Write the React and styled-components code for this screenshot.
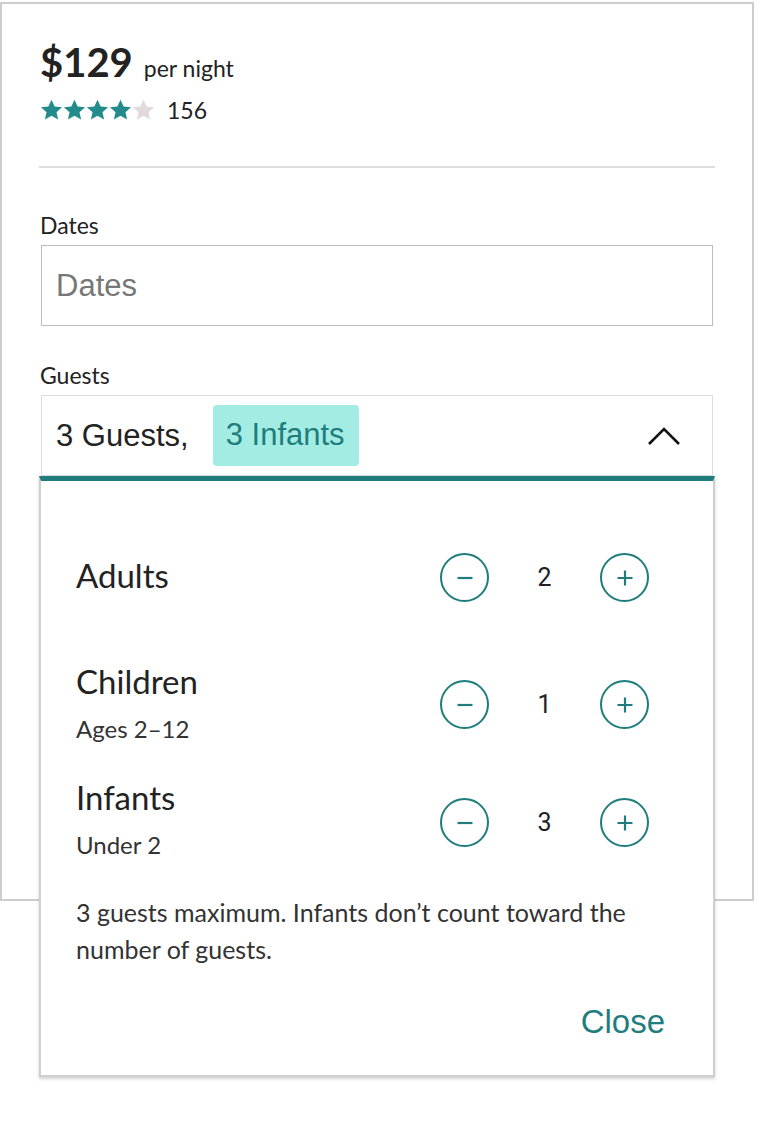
import React from 'react'
import styled, { createGlobalStyle } from 'styled-components'

const Global = createGlobalStyle`
  html, body, #root {
    min-height: 100%;
  }
  body {
    margin: 0;
    background: #fff;
    font-family: Lato, "Liberation Sans", sans-serif;
    color: #222;
  }
`

const teal = '#1f7d7d'

const Page = styled.main`
  min-height: 1132px;
`

const Card = styled.section`
  position: relative;
  width: 754px;
  min-height: 899px;
  margin-top: 2px;
  box-sizing: border-box;
  border: 2px solid #cdcdcd;
  padding: 34px 37px 0 37px;
`

const PriceRow = styled.div`
  display: flex;
  align-items: baseline;
  gap: 11px;
  line-height: 48px;
  padding-left: 1px;
`

const Price = styled.span`
  font-size: 40px;
  font-weight: 700;
  color: #222;
`

const PerNight = styled.span`
  font-size: 23px;
  color: #222;
`

const RatingRow = styled.div`
  display: flex;
  align-items: center;
  gap: 12px;
  height: 24px;
  margin-top: 6px;
  padding-left: 1px;
  font-size: 23px;
`

const Stars = styled.div`
  display: flex;
`

const Divider = styled.hr`
  border: 0;
  border-top: 2px solid #dedede;
  margin: 44px 0 44px 0;
`

const Label = styled.div`
  font-size: 23px;
  line-height: 26px;
  color: #222;
  margin-bottom: 7px;
  padding-left: 1px;
`

const Field = styled.div`
  position: relative;
  height: 81px;
  margin: 0 2px ${p => p.$gap || 0}px 2px;
  box-sizing: border-box;
  border: 1px solid ${p => p.$border};
  display: flex;
  align-items: center;
  padding: 0 16px 0 14px;
  font-family: "Liberation Sans", Arial, sans-serif;
  font-size: 31px;
`

const Placeholder = styled.span`
  color: #777;
`

const Chip = styled.span`
  margin-left: 24px;
  background: #a3ece4;
  color: ${teal};
  border-radius: 4px;
  padding: 12px 14px 13px 13px;
`

const Chevron = styled.svg`
  margin-left: auto;
  margin-right: 15px;
`

const Dropdown = styled.div`
  position: absolute;
  top: 80px;
  left: -3px;
  width: 676px;
  box-sizing: border-box;
  background: #fff;
  border: 2px solid #cfcfcf;
  border-top: 5px solid ${teal};
  box-shadow: 0 2px 3px rgba(0, 0, 0, 0.18);
  padding: 77px 48px 35px 35px;
  font-family: Lato, "Liberation Sans", sans-serif;
  z-index: 2;
`

const Row = styled.div`
  display: flex;
  align-items: flex-start;
  justify-content: space-between;
  margin-bottom: ${p => p.$mb}px;
`

const RowText = styled.div`
  display: flex;
  flex-direction: column;
`

const RowTitle = styled.div`
  font-size: 33px;
  line-height: 34px;
  color: #222;
`

const RowSub = styled.div`
  font-size: 24px;
  line-height: 28px;
  color: #333;
  margin-top: 17px;
`

const Counter = styled.div`
  display: flex;
  align-items: center;
  margin: ${p => p.$mt}px 16px 0 0;
`

const RoundButton = styled.button`
  width: 49px;
  height: 49px;
  border-radius: 50%;
  border: 2px solid ${teal};
  background: #fff;
  padding: 0;
  display: flex;
  align-items: center;
  justify-content: center;
  cursor: pointer;
`

const Count = styled.span`
  width: 111px;
  text-align: center;
  font-family: Roboto, "Liberation Sans", sans-serif;
  font-size: 25px;
  color: #222;
`

const Note = styled.p`
  margin: 35px 0 0 0;
  font-size: 25px;
  line-height: 37px;
  color: #333;
  max-width: 585px;
`

const Footer = styled.div`
  display: flex;
  justify-content: flex-end;
  margin-top: 36px;
`

const CloseButton = styled.button`
  border: 0;
  background: none;
  padding: 0;
  line-height: 36px;
  font-family: "Liberation Sans", Arial, sans-serif;
  font-size: 33px;
  color: ${teal};
  cursor: pointer;
`

const Star = ({ filled }) => (
  <svg width="23" height="22" viewBox="0 0 24 23">
    <path
      d="M12 0.8l3.3 7.1 7.7 0.8-5.8 5.2 1.7 7.6L12 17.6l-6.9 3.9 1.7-7.6L1 8.7l7.7-0.8z"
      fill={filled ? '#238b8b' : '#e2d9dc'}
    />
  </svg>
)

const Minus = () => (
  <svg width="20" height="20" viewBox="0 0 20 20">
    <path d="M2.5 10h15" stroke={teal} strokeWidth="2.2" />
  </svg>
)

const Plus = () => (
  <svg width="20" height="20" viewBox="0 0 20 20">
    <path d="M2.5 10h15M10 2.5v15" stroke={teal} strokeWidth="2.2" />
  </svg>
)

const rows = [
  { title: 'Adults', count: 2, mb: 62, mt: -5 },
  { title: 'Children', sub: 'Ages 2–12', count: 1, mb: 37, mt: 16 },
  { title: 'Infants', sub: 'Under 2', count: 3, mb: 0, mt: 18 },
]

export default function App() {
  return (
    <Page>
      <Global />
      <Card>
        <PriceRow>
          <Price>$129</Price>
          <PerNight>per night</PerNight>
        </PriceRow>
        <RatingRow>
          <Stars>
            {[1, 2, 3, 4, 5].map(i => (
              <Star key={i} filled={i <= 4} />
            ))}
          </Stars>
          <span>156</span>
        </RatingRow>
        <Divider />
        <Label>Dates</Label>
        <Field $border="#bdbdbd" $gap={36}>
          <Placeholder>Dates</Placeholder>
        </Field>
        <Label>Guests</Label>
        <Field $border="#dcdcdc">
          <span>3 Guests,</span>
          <Chip>3 Infants</Chip>
          <Chevron width="34" height="20" viewBox="0 0 34 20">
            <path d="M2 18L17 3l15 15" fill="none" stroke="#111" strokeWidth="2.6" />
          </Chevron>
          <Dropdown>
            {rows.map(r => (
              <Row key={r.title} $mb={r.mb}>
                <RowText>
                  <RowTitle>{r.title}</RowTitle>
                  {r.sub && <RowSub>{r.sub}</RowSub>}
                </RowText>
                <Counter $mt={r.mt}>
                  <RoundButton aria-label="decrease">
                    <Minus />
                  </RoundButton>
                  <Count>{r.count}</Count>
                  <RoundButton aria-label="increase">
                    <Plus />
                  </RoundButton>
                </Counter>
              </Row>
            ))}
            <Note>3 guests maximum. Infants don’t count toward the number of guests.</Note>
            <Footer>
              <CloseButton>Close</CloseButton>
            </Footer>
          </Dropdown>
        </Field>
      </Card>
    </Page>
  )
}
